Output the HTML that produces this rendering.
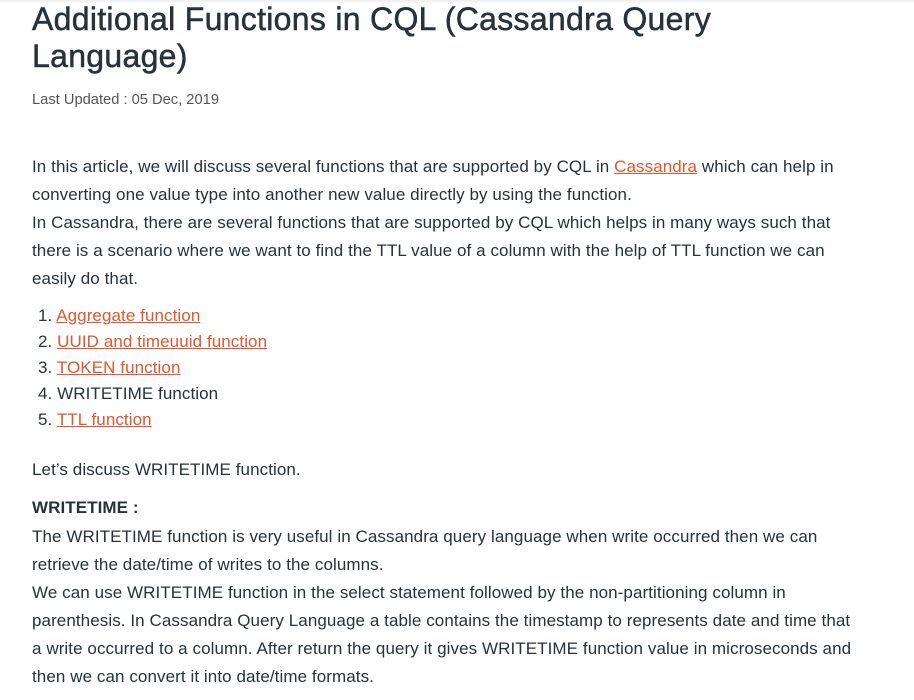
<!DOCTYPE html>
<html><head><meta charset="utf-8"><style>
body{margin:0;background:#fff;width:914px;height:700px;overflow:hidden;font-family:"Liberation Sans",sans-serif;color:#273239;}
.top{position:absolute;left:0;top:0;width:914px;height:4px;background:linear-gradient(#eee,#fff);}
h1{position:absolute;left:32px;top:1px;margin:0;font-size:32px;line-height:37px;font-weight:normal;color:#273239;letter-spacing:0.3px;-webkit-text-stroke:0.5px #273239;}
.date{position:absolute;left:32px;top:92px;font-size:14.7px;color:#555;}
.l{position:absolute;left:32px;font-size:17px;white-space:nowrap;line-height:20px;letter-spacing:0.08px;}
a{color:#e5552e;text-decoration:underline;}
b{font-weight:bold;}
</style></head><body>
<div class="top"></div>
<h1>Additional Functions in CQL (Cassandra Query<br>Language)</h1>
<div class="date">Last Updated : 05 Dec, 2019</div>
<div class="l" style="top:157px">In this article, we will discuss several functions that are supported by CQL in <a>Cassandra</a> which can help in</div>
<div class="l" style="top:185px">converting one value type into another new value directly by using the function.</div>
<div class="l" style="top:213px">In Cassandra, there are several functions that are supported by CQL which helps in many ways such that</div>
<div class="l" style="top:241px">there is a scenario where we want to find the TTL value of a column with the help of TTL function we can</div>
<div class="l" style="top:269px">easily do that.</div>
<div class="l" style="top:306px;left:38px">1. <a>Aggregate function</a></div>
<div class="l" style="top:332px;left:38px">2. <a>UUID and timeuuid function</a></div>
<div class="l" style="top:358px;left:38px">3. <a>TOKEN function</a></div>
<div class="l" style="top:384px;left:38px">4. WRITETIME function</div>
<div class="l" style="top:410px;left:38px">5. <a>TTL function</a></div>
<div class="l" style="top:460px">Let’s discuss WRITETIME function.</div>
<div class="l" style="top:498px"><b>WRITETIME :</b></div>
<div class="l" style="top:527px">The WRITETIME function is very useful in Cassandra query language when write occurred then we can</div>
<div class="l" style="top:555px">retrieve the date/time of writes to the columns.</div>
<div class="l" style="top:583px">We can use WRITETIME function in the select statement followed by the non-partitioning column in</div>
<div class="l" style="top:611px">parenthesis. In Cassandra Query Language a table contains the timestamp to represents date and time that</div>
<div class="l" style="top:639px">a write occurred to a column. After return the query it gives WRITETIME function value in microseconds and</div>
<div class="l" style="top:667px">then we can convert it into date/time formats.</div>
</body></html>
